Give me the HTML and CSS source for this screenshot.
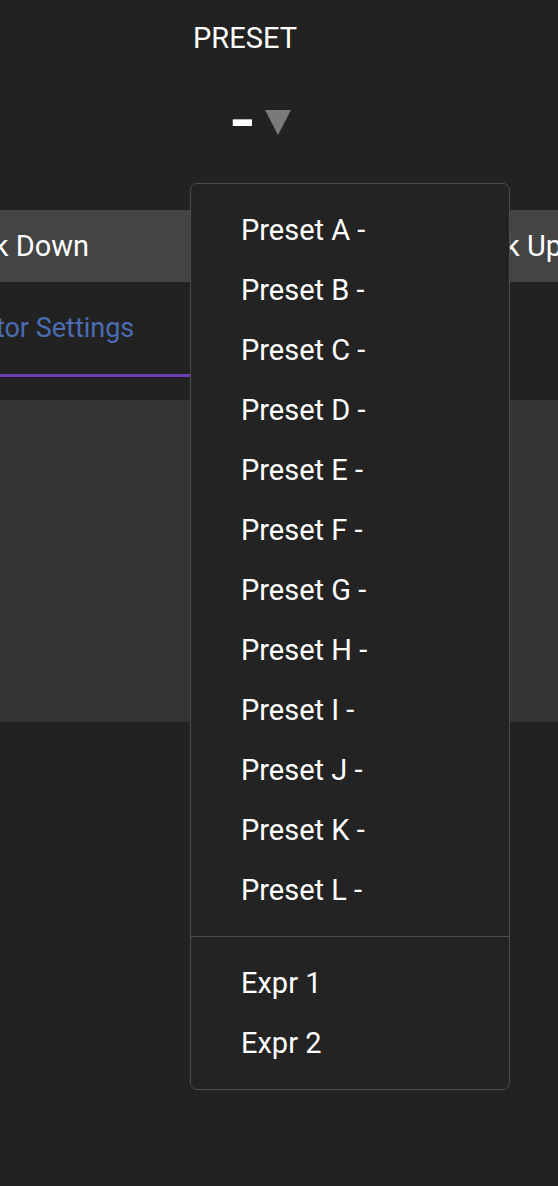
FILE: index.html
```html
<!DOCTYPE html>
<html>
<head>
<meta charset="utf-8">
<link rel="stylesheet" href="styles.css">
</head>
<body>
<div class="page">
  <header class="preset-header">
    <div class="preset-label">PRESET</div>
    <div class="preset-control">
      <span class="preset-value">-</span>
      <svg class="preset-caret" width="26" height="25" viewBox="0 0 26 25"><polygon points="0,0 26,0 13,25" fill="#7a7a7a"/></svg>
    </div>
  </header>

  <div class="bank-bar">
    <span class="bank-btn bank-down">Bank Down</span>
    <span class="bank-btn bank-up">Bank Up</span>
  </div>

  <div class="tab-row">
    <div class="tab active">Editor Settings</div>
  </div>

  <div class="panel"></div>

  <div class="dropdown">
    <div class="dd-item">Preset A -</div>
    <div class="dd-item">Preset B -</div>
    <div class="dd-item">Preset C -</div>
    <div class="dd-item">Preset D -</div>
    <div class="dd-item">Preset E -</div>
    <div class="dd-item">Preset F -</div>
    <div class="dd-item">Preset G -</div>
    <div class="dd-item">Preset H -</div>
    <div class="dd-item">Preset I -</div>
    <div class="dd-item">Preset J -</div>
    <div class="dd-item">Preset K -</div>
    <div class="dd-item">Preset L -</div>
    <div class="dd-sep"></div>
    <div class="dd-item">Expr 1</div>
    <div class="dd-item">Expr 2</div>
  </div>
</div>
</body>
</html>
```

FILE: styles.css
```css
* { box-sizing: border-box; }
html, body {
  margin: 0;
  padding: 0;
  background: #222222;
  color: #ffffff;
  font-family: Roboto, "Liberation Sans", sans-serif;
}
.page {
  position: relative;
  width: 558px;
  height: 1186px;
  overflow: hidden;
}
.preset-header {
  width: 490px;
  padding-top: 21px;
  display: flex;
  flex-direction: column;
  align-items: center;
}
.preset-label {
  font-size: 29px;
  line-height: 34px;
}
.preset-control {
  margin-top: 54px;
  height: 26px;
  display: flex;
  align-items: center;
  padding-left: 32px;
  gap: 10px;
}
.preset-value {
  display: block;
  font-size: 52px;
  font-weight: 900;
  line-height: 26px;
  height: 26px;
  color: #ffffff;
  transform: scaleX(1.25);
}
.preset-caret { display: block; }

.bank-bar {
  margin-top: 75px;
  height: 72px;
  background: #444444;
  display: flex;
  align-items: center;
  overflow: hidden;
}
.bank-btn {
  font-size: 29px;
  white-space: nowrap;
  flex: none;
}
.bank-down { margin-left: -56px; }
.bank-up { margin-left: auto; margin-right: -4px; }

.tab-row {
  height: 96px;
  display: flex;
  overflow: hidden;
  border-bottom: 1px solid #1f1f1f;
}
.tab {
  flex: none;
  height: 95px;
  margin-left: -101px;
  padding: 0 60px;
  font-size: 27px;
  line-height: 92px;
  color: #4a6db3;
  white-space: nowrap;
}
.tab.active { border-bottom: 3px solid #6c40b8; }

.panel {
  margin-top: 22px;
  height: 322px;
  background: #333333;
}

.dropdown {
  position: absolute;
  left: 190px;
  top: 183px;
  width: 320px;
  background: #232323;
  border: 1px solid #4d4d4d;
  border-radius: 7px;
  padding: 16px 0;
}
.dd-item {
  height: 60px;
  line-height: 60px;
  padding-left: 50px;
  font-size: 29px;
  color: #ffffff;
  white-space: nowrap;
}
.dd-sep {
  height: 1px;
  margin: 16px 0;
  background: #4d4d4d;
}
```
